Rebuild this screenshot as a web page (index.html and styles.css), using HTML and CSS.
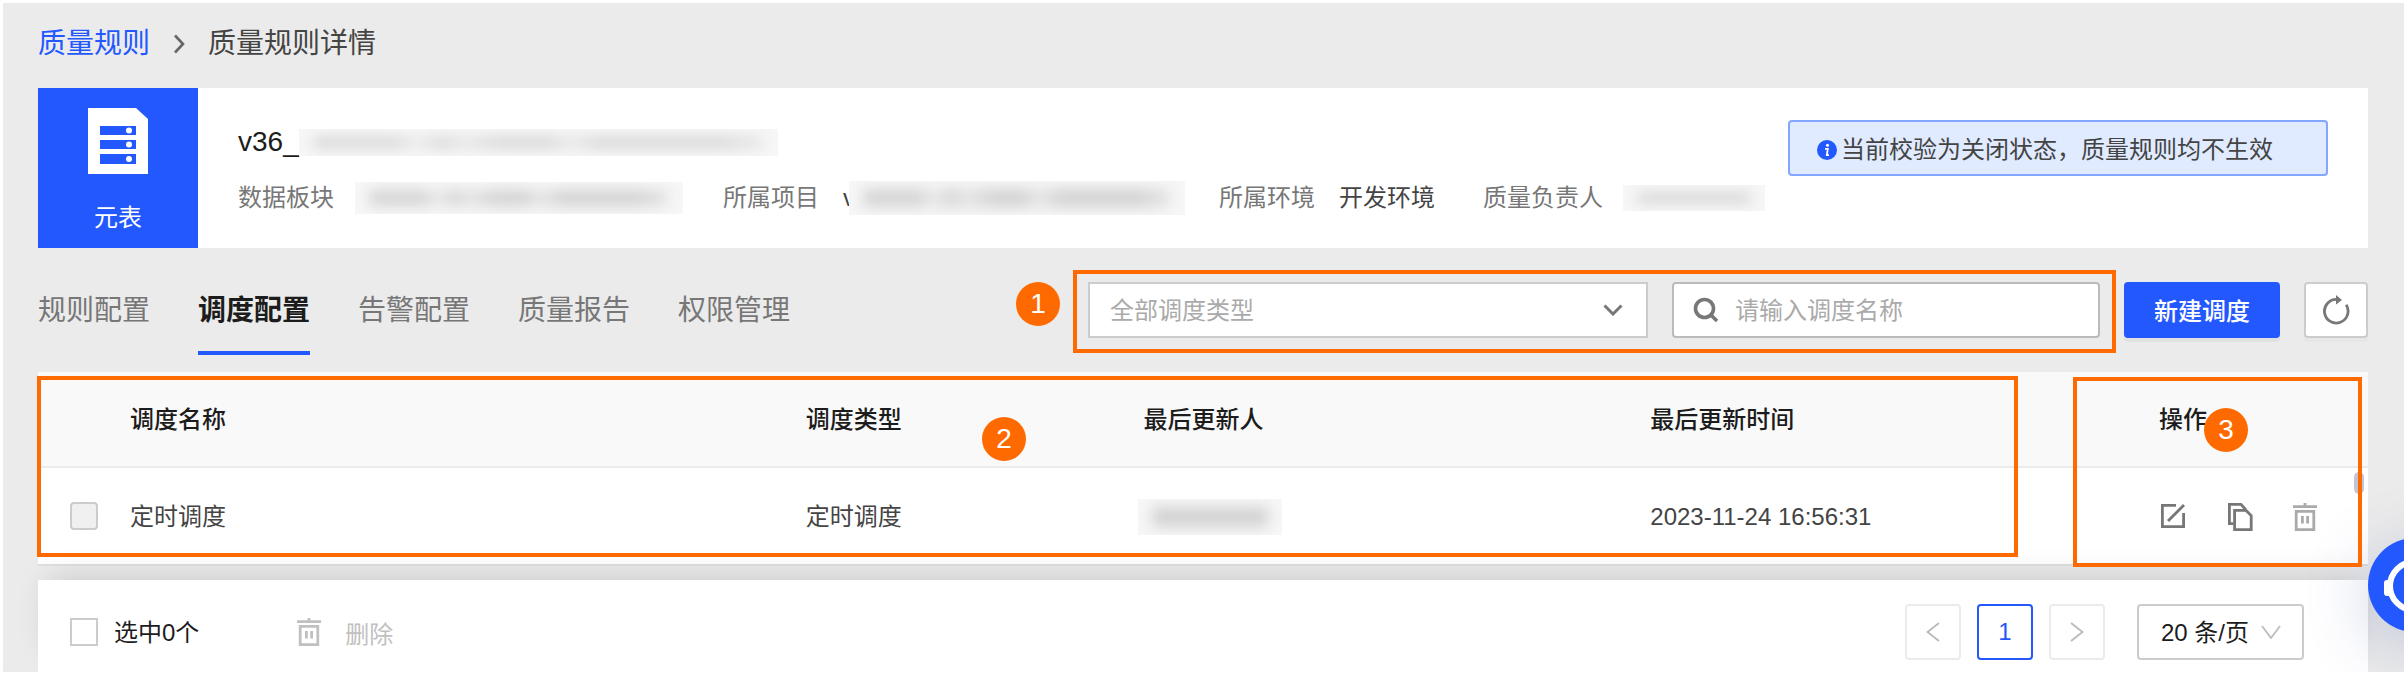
FILE: index.html
```
<!DOCTYPE html>
<html lang="zh-CN">
<head>
    <meta charset="UTF-8">
    <meta name="viewport" content="width=device-width, initial-scale=1.0">
    <title>质量规则详情</title>
    <link rel="stylesheet" href="styles.css">
</head>
<body>
    <div class="page">
        <nav class="breadcrumb">
            <a href="#">质量规则</a>
            <svg width="12" height="20" viewBox="0 0 12 20" fill="none" stroke="#666" stroke-width="2.6"><path d="M2 1.5L10 10L2 18.5"/></svg>
            <span>质量规则详情</span>
        </nav>

        <section class="card">
            <div class="card-type">
                <svg width="60" height="66" viewBox="0 0 60 66">
                    <path d="M0 0H48L60 11V66H0Z" fill="#fff"/>
                    <path d="M12 18H48V27H12ZM12 32H48V41H12ZM12 46H48V56H12Z" fill="#2358ff"/>
                    <circle cx="41" cy="22.5" r="3" fill="#fff"/>
                    <circle cx="41" cy="36.5" r="3" fill="#fff"/>
                    <circle cx="41" cy="51" r="3" fill="#fff"/>
                </svg>
                <span>元表</span>
            </div>
            <div class="card-info">
                <h1>v36_<span class="mask mask-title"></span></h1>
                <dl class="meta">
                    <dt>数据板块</dt>
                    <dd><span class="mask mask-block"></span></dd>
                    <dt>所属项目</dt>
                    <dd>v<span class="mask mask-project"></span></dd>
                    <dt>所属环境</dt>
                    <dd>开发环境</dd>
                    <dt>质量负责人</dt>
                    <dd><span class="mask mask-owner"></span></dd>
                </dl>
            </div>
            <div class="notice">
                <svg width="20" height="20" viewBox="0 0 20 20">
                    <circle cx="10" cy="10" r="10" fill="#2358ff"/>
                    <circle cx="10.5" cy="5.2" r="1.5" fill="#fff"/>
                    <path d="M8 8.8H10.8L9.8 15.2H12" fill="none" stroke="#fff" stroke-width="1.8"/>
                </svg>
                <span>当前校验为关闭状态，质量规则均不生效</span>
            </div>
        </section>

        <div class="toolbar">
            <nav class="tabs">
                <a href="#">规则配置</a>
                <a href="#" class="active">调度配置</a>
                <a href="#">告警配置</a>
                <a href="#">质量报告</a>
                <a href="#">权限管理</a>
            </nav>
            <div class="filters">
                <span class="badge badge-1">1</span>
                <div class="type-select">
                    <select aria-label="调度类型">
                        <option>全部调度类型</option>
                    </select>
                    <svg width="20" height="12" viewBox="0 0 20 12" fill="none" stroke="#777" stroke-width="3"><path d="M1.5 1.5L10 10L18.5 1.5"/></svg>
                </div>
                <div class="search">
                    <svg width="26" height="26" viewBox="0 0 26 26" fill="none" stroke="#777" stroke-width="3.6"><circle cx="11.5" cy="11.5" r="9"/><path d="M17.5 17.5L24 24"/></svg>
                    <input type="text" placeholder="请输入调度名称" aria-label="调度名称">
                </div>
            </div>
            <button class="btn-primary">新建调度</button>
            <button class="btn-refresh" aria-label="刷新">
                <svg width="28" height="30" viewBox="0 0 28 30"><path d="M15 4.4A11.8 11.8 0 1 0 24.2 9.8" fill="none" stroke="#777" stroke-width="2.8"/><path d="M14 0L20 5L14 9.4Z" fill="#777"/></svg>
            </button>
        </div>

        <div class="table-wrap">
            <table>
                <colgroup>
                    <col class="col-check">
                    <col class="col-name">
                    <col class="col-type">
                    <col class="col-user">
                    <col>
                    <col class="col-action">
                </colgroup>
                <thead>
                    <tr>
                        <th></th>
                        <th>调度名称</th>
                        <th>调度类型</th>
                        <th>最后更新人</th>
                        <th>最后更新时间</th>
                        <th>操作</th>
                    </tr>
                </thead>
                <tbody>
                    <tr>
                        <td class="check"><input type="checkbox" class="checkbox" aria-label="选择定时调度" disabled></td>
                        <td>定时调度</td>
                        <td>定时调度</td>
                        <td><span class="mask mask-user"></span></td>
                        <td>2023-11-24 16:56:31</td>
                        <td>
                            <div class="actions">
                                <button aria-label="编辑">
                                    <svg width="28" height="28" viewBox="0 0 28 28" fill="none" stroke="#777" stroke-width="2.8"><path d="M17 2.4H3.4V23.6H24.6V10"/><path d="M9 18L25 2"/></svg>
                                </button>
                                <button aria-label="复制">
                                    <svg width="28" height="28" viewBox="0 0 28 28" fill="none" stroke="#777" stroke-width="2.8"><path d="M8.5 20.6H4.4V1.4H16L20.6 6.5"/><path d="M9.6 7.4H21L26.2 12.6V26.6H9.6Z"/></svg>
                                </button>
                                <button aria-label="删除" disabled>
                                    <svg width="28" height="28" viewBox="0 0 28 28" fill="none" stroke="#aaa" stroke-width="2.8"><path d="M2 3.6H26M14 0V3M5.2 8.4H22.8V26.6H5.2ZM11.4 13V20.6M16.6 13V20.6"/></svg>
                                </button>
                            </div>
                        </td>
                    </tr>
                </tbody>
            </table>
            <span class="scroll-thumb"></span>
            <span class="outline outline-list"></span>
            <span class="outline outline-action"></span>
            <span class="badge badge-2">2</span>
            <span class="badge badge-3">3</span>
        </div>

        <footer class="footer">
            <label class="select-all"><input type="checkbox" class="checkbox"><span>选中0个</span></label>
            <button class="btn-delete" disabled>
                <svg width="28" height="28" viewBox="0 0 28 28" fill="none" stroke="#c0c0c0" stroke-width="2.8"><path d="M2 3.6H26M14 0V3M5.2 8.4H22.8V26.6H5.2ZM11.4 13V20.6M16.6 13V20.6"/></svg>
                <span>删除</span>
            </button>
            <div class="pager">
                <button aria-label="上一页" disabled>
                    <svg width="14" height="20" viewBox="0 0 14 20" fill="none" stroke="#bbb" stroke-width="2"><path d="M13 1L1.5 10L13 19"/></svg>
                </button>
                <button class="current">1</button>
                <button aria-label="下一页" disabled>
                    <svg width="14" height="20" viewBox="0 0 14 20" fill="none" stroke="#bbb" stroke-width="2"><path d="M1 1L12.5 10L1 19"/></svg>
                </button>
            </div>
            <div class="page-size">
                <select aria-label="每页条数">
                    <option>20 条/页</option>
                </select>
                <svg width="20" height="14" viewBox="0 0 20 14" fill="none" stroke="#c0c0c0" stroke-width="2"><path d="M1 1L10 13L19 1"/></svg>
            </div>
        </footer>

        <button class="help" aria-label="帮助">
            <svg width="94" height="94" viewBox="0 0 94 94"><circle cx="46" cy="48" r="24" fill="none" stroke="#fff" stroke-width="6"/><rect x="16" y="42" width="9" height="16" rx="3" fill="#fff"/></svg>
        </button>
    </div>
</body>
</html>
```
FILE: styles.css
```
* {
    box-sizing: border-box;
}
body {
    margin: 3px 4px 4px 3px;
    background-color: #fff;
    color: #444;
    font-family: "Liberation Sans", "Noto Sans CJK SC", sans-serif;
    font-size: 24px;
    line-height: 36px;
}
button, input, select {
    font-family: inherit;
    font-size: 24px;
}
svg {
    display: block;
    flex-shrink: 0;
}
a {
    text-decoration: none;
}
.page {
    position: relative;
    padding: 0 36px 0 35px;
    background-color: #ebebeb;
    border-radius: 2px;
    box-shadow: 0 0 4px rgba(0, 0, 0, 0.3);
    overflow: hidden;
}

/* breadcrumb */
.breadcrumb {
    display: flex;
    align-items: center;
    gap: 23px;
    height: 85px;
    padding-bottom: 4px;
    font-size: 28px;
}
.breadcrumb a {
    color: #2358ff;
}

/* header card */
.card {
    display: flex;
    min-height: 160px;
    background-color: #fff;
}
.card-type {
    display: flex;
    flex-direction: column;
    flex-shrink: 0;
    align-items: center;
    gap: 26px;
    width: 160px;
    padding-top: 20px;
    background-color: #2358ff;
    color: #fff;
}
.card-info {
    flex: 1;
    min-width: 0;
    padding: 36px 0 0 40px;
}
.card h1 {
    display: flex;
    align-items: center;
    height: 36px;
    margin: 0;
    color: #1c1c1c;
    font-size: 28px;
    font-weight: normal;
}
.meta {
    display: flex;
    align-items: center;
    height: 36px;
    margin: 20px 0 0;
    white-space: nowrap;
}
.meta dt {
    color: #777;
}
.meta dd {
    display: flex;
    align-items: center;
    margin: 0 48px 0 24px;
}
.meta dd:last-child {
    margin-right: 0;
}
.notice {
    display: flex;
    flex-shrink: 0;
    align-items: center;
    gap: 4px;
    height: 56px;
    margin: 32px 40px 0 0;
    padding: 3px 53px 0 27px;
    background-color: #e0ebff;
    border: 2px solid #83a6ff;
    border-radius: 4px;
    white-space: nowrap;
}

/* smudged private values */
.mask {
    position: relative;
    display: block;
    flex-shrink: 0;
    background-color: #f7f7f7;
    overflow: hidden;
}
.mask::before {
    content: "";
    position: absolute;
    inset: 8px 14px;
    background: linear-gradient(90deg, #d4d4d4 0 18%, #ebebeb 23%, #d4d4d4 28%, #e4e4e4 34%, #d2d2d2 42% 52%, #e6e6e6 57%, #d2d2d2 64% 90%, #e6e6e6);
    filter: blur(7px);
}
.mask-title {
    width: 479px;
    height: 27px;
}
.mask-block {
    width: 328px;
    height: 32px;
    margin: 0 -8px 0 -3px;
}
.mask-project {
    width: 336px;
    height: 34px;
    margin: 0 -14px 0 -6px;
}
.mask-owner {
    width: 142px;
    height: 26px;
    margin-left: -4px;
}
.mask-user {
    width: 144px;
    height: 36px;
    margin-left: -6px;
}
.mask-owner::before, .mask-user::before {
    background: #d2d2d2;
}

/* tabs and filters */
.toolbar {
    display: flex;
    align-items: flex-start;
    padding: 34px 0 17px;
}
.tabs {
    display: flex;
    gap: 48px;
    margin-right: auto;
    font-size: 28px;
    line-height: 58px;
}
.tabs a {
    padding-bottom: 11px;
    border-bottom: 4px solid transparent;
    color: #777;
}
.tabs a.active {
    border-color: #2358ff;
    color: #1c1c1c;
    font-weight: bold;
}
.filters {
    position: relative;
    display: flex;
    gap: 24px;
    margin-right: 24px;
}
.filters::after {
    content: "";
    position: absolute;
    inset: -12px -16px -15px -15px;
    border: 4px solid #ff6a00;
    pointer-events: none;
}
.type-select {
    position: relative;
    width: 560px;
}
.type-select select {
    width: 100%;
    height: 56px;
    padding: 0 20px;
    appearance: none;
    background-color: #fff;
    border: 2px solid #ccc;
    border-radius: 0;
    color: #aaa;
}
.type-select svg {
    position: absolute;
    top: 22px;
    right: 25px;
    pointer-events: none;
}
.search {
    display: flex;
    align-items: center;
    gap: 16px;
    width: 428px;
    height: 56px;
    padding: 0 19px;
    background-color: #fff;
    border: 2px solid #bbb;
    border-radius: 4px;
}
.search input {
    flex: 1;
    min-width: 0;
    padding: 2px 0 0;
    background: none;
    border: none;
    outline: none;
}
.search input::placeholder {
    color: #aaa;
}
.btn-primary {
    width: 156px;
    height: 56px;
    margin-right: 24px;
    padding: 0 0 2px;
    background-color: #2358ff;
    border: none;
    border-radius: 4px;
    box-shadow: 0 4px 0 rgba(0, 0, 0, 0.04);
    color: #fff;
    font-weight: 500;
}
.btn-refresh {
    display: flex;
    align-items: center;
    justify-content: center;
    width: 64px;
    height: 56px;
    padding: 0;
    background-color: #fff;
    border: 2px solid #ccc;
    border-radius: 4px;
    box-shadow: 0 4px 0 rgba(0, 0, 0, 0.02);
}

/* table */
.table-wrap {
    position: relative;
    padding-bottom: 14px;
}
table {
    width: 100%;
    table-layout: fixed;
    border-collapse: separate;
    border-spacing: 0;
    background-color: #fff;
}
.col-check {
    width: 68px;
}
.col-name {
    width: 29%;
}
.col-type {
    width: 14.5%;
}
.col-user {
    width: 21.75%;
}
.col-action {
    width: 233px;
}
th, td {
    padding: 2px 0 0 24px;
    text-align: left;
}
th {
    height: 96px;
    background-color: #f9f9f9;
    border-bottom: 2px solid #ebebeb;
    color: #1c1c1c;
    font-weight: 500;
}
td {
    height: 98px;
    border-bottom: 2px solid #e0e0e0;
}
td.check {
    padding: 0 0 0 32px;
}
.checkbox {
    display: block;
    width: 28px;
    height: 28px;
    margin: 0;
    appearance: none;
    background-color: #fff;
    border: 2px solid #ccc;
}
.checkbox:disabled {
    background-color: #f0f0f0;
    border-radius: 4px;
}
.actions {
    display: flex;
    gap: 38px;
}
.actions button {
    padding: 0;
    background: none;
    border: none;
}
.scroll-thumb {
    position: absolute;
    top: 100px;
    right: 4px;
    width: 10px;
    height: 22px;
    background-color: #c1c5d6;
    border-radius: 5px;
}

/* numbered callouts */
.outline {
    position: absolute;
    z-index: 2;
    border: 4px solid #ff6a00;
    pointer-events: none;
}
.outline-list {
    top: 4px;
    bottom: 23px;
    left: -1px;
    right: 350px;
}
.outline-action {
    top: 5px;
    bottom: 13px;
    right: 6px;
    width: 289px;
}
.badge {
    position: absolute;
    z-index: 3;
    width: 44px;
    height: 44px;
    background-color: #ff6a00;
    border-radius: 50%;
    color: #fff;
    font-size: 28px;
    line-height: 44px;
    text-align: center;
}
.badge-1 {
    top: 0;
    left: -72px;
}
.badge-2 {
    top: 45px;
    left: 944px;
}
.badge-3 {
    top: 36px;
    right: 120px;
}

/* footer */
.footer {
    position: relative;
    display: flex;
    align-items: center;
    height: 92px;
    padding: 12px 64px 0 32px;
    background-color: #fff;
    box-shadow: 0 -12px 32px -12px rgba(0, 0, 0, 0.17);
    color: #1c1c1c;
}
.select-all {
    display: flex;
    align-items: center;
    gap: 16px;
}
.select-all span {
    padding-top: 2px;
}
.btn-delete {
    display: flex;
    align-items: center;
    gap: 22px;
    margin-left: 96px;
    padding: 0;
    background: none;
    border: none;
    color: #c0c0c0;
}
.pager {
    display: flex;
    gap: 16px;
    margin-left: auto;
}
.pager button {
    display: flex;
    align-items: center;
    justify-content: center;
    width: 56px;
    height: 56px;
    padding: 0;
    background-color: #fff;
    border: 2px solid #ebebeb;
    border-radius: 4px;
}
.pager .current {
    border-color: #2358ff;
    color: #2358ff;
}
.page-size {
    position: relative;
    width: 167px;
    margin-left: 32px;
}
.page-size select {
    display: block;
    width: 100%;
    height: 56px;
    padding: 0 22px;
    appearance: none;
    background-color: #fff;
    border: 2px solid #ccc;
    border-radius: 4px;
    color: #1c1c1c;
}
.page-size svg {
    position: absolute;
    top: 21px;
    right: 23px;
    pointer-events: none;
}

/* floating help button, half off the edge */
.help {
    position: absolute;
    right: -58px;
    bottom: 40px;
    width: 94px;
    height: 94px;
    padding: 0;
    background-color: #2358ff;
    border: none;
    border-radius: 50%;
    box-shadow: 0 12px 64px rgba(50, 70, 160, 0.25);
}
```
